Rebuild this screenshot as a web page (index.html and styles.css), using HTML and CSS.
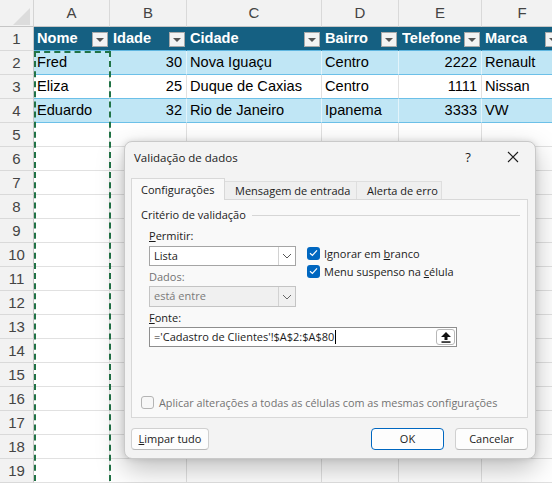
FILE: index.html
```html
<!DOCTYPE html>
<html lang="pt-BR">
<head>
<meta charset="utf-8">
<title>Validação de dados</title>
<link rel="stylesheet" href="styles.css">
</head>
<body>
<div class="sheet">
  <div class="row hdr">
    <div class="corner"><span class="tri"></span></div>
    <div class="ch">A</div><div class="ch">B</div><div class="ch">C</div><div class="ch">D</div><div class="ch">E</div><div class="ch">F</div>
  </div>
  <div class="row thead">
    <div class="rh">1</div>
    <div class="c th"><span class="t">Nome</span><span class="fb"></span></div>
    <div class="c th"><span class="t">Idade</span><span class="fb"></span></div>
    <div class="c th"><span class="t">Cidade</span><span class="fb"></span></div>
    <div class="c th"><span class="t">Bairro</span><span class="fb"></span></div>
    <div class="c th"><span class="t">Telefone</span><span class="fb"></span></div>
    <div class="c th"><span class="t">Marca</span><span class="fb"></span></div>
  </div>
  <div class="row band">
    <div class="rh">2</div>
    <div class="c">Fred</div><div class="c num">30</div><div class="c">Nova Iguaçu</div><div class="c">Centro</div><div class="c num">2222</div><div class="c">Renault</div>
  </div>
  <div class="row plain">
    <div class="rh">3</div>
    <div class="c">Eliza</div><div class="c num">25</div><div class="c">Duque de Caxias</div><div class="c">Centro</div><div class="c num">1111</div><div class="c">Nissan</div>
  </div>
  <div class="row band">
    <div class="rh">4</div>
    <div class="c">Eduardo</div><div class="c num">32</div><div class="c">Rio de Janeiro</div><div class="c">Ipanema</div><div class="c num">3333</div><div class="c">VW</div>
  </div>
  <div class="row"><div class="rh">5</div><div class="c"></div><div class="c"></div><div class="c"></div><div class="c"></div><div class="c"></div><div class="c"></div></div>
  <div class="row"><div class="rh">6</div><div class="c"></div><div class="c"></div><div class="c"></div><div class="c"></div><div class="c"></div><div class="c"></div></div>
  <div class="row"><div class="rh">7</div><div class="c"></div><div class="c"></div><div class="c"></div><div class="c"></div><div class="c"></div><div class="c"></div></div>
  <div class="row"><div class="rh">8</div><div class="c"></div><div class="c"></div><div class="c"></div><div class="c"></div><div class="c"></div><div class="c"></div></div>
  <div class="row"><div class="rh">9</div><div class="c"></div><div class="c"></div><div class="c"></div><div class="c"></div><div class="c"></div><div class="c"></div></div>
  <div class="row"><div class="rh">10</div><div class="c"></div><div class="c"></div><div class="c"></div><div class="c"></div><div class="c"></div><div class="c"></div></div>
  <div class="row"><div class="rh">11</div><div class="c"></div><div class="c"></div><div class="c"></div><div class="c"></div><div class="c"></div><div class="c"></div></div>
  <div class="row"><div class="rh">12</div><div class="c"></div><div class="c"></div><div class="c"></div><div class="c"></div><div class="c"></div><div class="c"></div></div>
  <div class="row"><div class="rh">13</div><div class="c"></div><div class="c"></div><div class="c"></div><div class="c"></div><div class="c"></div><div class="c"></div></div>
  <div class="row"><div class="rh">14</div><div class="c"></div><div class="c"></div><div class="c"></div><div class="c"></div><div class="c"></div><div class="c"></div></div>
  <div class="row"><div class="rh">15</div><div class="c"></div><div class="c"></div><div class="c"></div><div class="c"></div><div class="c"></div><div class="c"></div></div>
  <div class="row"><div class="rh">16</div><div class="c"></div><div class="c"></div><div class="c"></div><div class="c"></div><div class="c"></div><div class="c"></div></div>
  <div class="row"><div class="rh">17</div><div class="c"></div><div class="c"></div><div class="c"></div><div class="c"></div><div class="c"></div><div class="c"></div></div>
  <div class="row"><div class="rh">18</div><div class="c"></div><div class="c"></div><div class="c"></div><div class="c"></div><div class="c"></div><div class="c"></div></div>
  <div class="row"><div class="rh">19</div><div class="c"></div><div class="c"></div><div class="c"></div><div class="c"></div><div class="c"></div><div class="c"></div></div>

  <div class="ants"></div>

  <div class="dlg">
    <div class="titlebar">
      <span class="title">Validação de dados</span>
      <span class="help">?</span>
      <span class="close"><svg width="12" height="12" viewBox="0 0 12 12"><path d="M1 1 L11 11 M11 1 L1 11" stroke="#1b1b1b" stroke-width="1.1" fill="none"/></svg></span>
    </div>
    <div class="tabs">
      <div class="tab active">Configurações</div>
      <div class="tab t2">Mensagem de entrada</div>
      <div class="tab t3">Alerta de erro</div>
    </div>
    <div class="panel">
      <div class="legend">Critério de validação</div>
      <div class="crit">
        <div class="top">
          <div class="left">
            <div class="lbl"><u>P</u>ermitir:</div>
            <div class="sel">
              <span class="val">Lista</span>
              <span class="dd"><svg width="10" height="6" viewBox="0 0 10 6"><path d="M1 1 L5 5 L9 1" stroke="#555" stroke-width="1" fill="none"/></svg></span>
            </div>
            <div class="lbl gray lbl2">Dados:</div>
            <div class="sel dis">
              <span class="val">está entre</span>
              <span class="dd"><svg width="10" height="6" viewBox="0 0 10 6"><path d="M1 1 L5 5 L9 1" stroke="#666" stroke-width="1" fill="none"/></svg></span>
            </div>
          </div>
          <div class="right">
            <div class="chk"><span class="box on"><svg width="9" height="8" viewBox="0 0 9 8"><path d="M1 4.2 L3.4 6.4 L8 1.4" stroke="#fff" stroke-width="1.2" fill="none"/></svg></span><span class="ltxt">Ignorar em <u>b</u>ranco</span></div>
            <div class="chk"><span class="box on"><svg width="9" height="8" viewBox="0 0 9 8"><path d="M1 4.2 L3.4 6.4 L8 1.4" stroke="#fff" stroke-width="1.2" fill="none"/></svg></span><span class="ltxt">Menu suspenso na <u>c</u>élula</span></div>
          </div>
        </div>
        <div class="lbl lbl3"><u>F</u>onte:</div>
        <div class="inp">
          <span class="txt">='Cadastro de Clientes'!$A$2:$A$80</span><span class="caret"></span>
          <span class="rng"><svg width="10" height="11" viewBox="0 0 10 11"><path d="M5 0 L10 5 L6.5 5 L6.5 8 L3.5 8 L3.5 5 L0 5 Z" fill="#111"/><rect x="0.5" y="9.3" width="9" height="1.5" fill="#111"/></svg></span>
        </div>
      </div>
      <div class="chk apply"><span class="box off"></span><span class="ltxt">Aplicar alterações a todas as células com as mesmas configurações</span></div>
    </div>
    <div class="footer">
      <div class="btn b1"><u>L</u>impar tudo</div>
      <div class="btn ok">OK</div>
      <div class="btn cancel">Cancelar</div>
    </div>
  </div>
</div>
</body>
</html>
```
FILE: styles.css
```css
html, body {
  margin: 0;
  padding: 0;
  overflow: hidden;
  background: #ffffff;
}
.sheet {
  position: relative;
  width: 552px;
  height: 483px;
  overflow: hidden;
  font-family: "Liberation Sans", Arial, sans-serif;
  font-size: 14.6px;
  color: #000;
}
.row {
  display: grid;
  grid-template-columns: 34px 76px 77px 135px 77px 83px 81px;
  width: 563px;
  height: 24px;
}
.row.hdr {
  height: 27px;
}
.row > div {
  box-sizing: border-box;
  border-right: 1px solid #e1e1e1;
  border-bottom: 1px solid #e1e1e1;
  line-height: 23px;
  white-space: nowrap;
  overflow: hidden;
}
.corner {
  background: #f2f2f2;
  position: relative;
  border-right: 1px solid #d4d4d4 !important;
  border-bottom: 1px solid #c6c6c6 !important;
}
.tri {
  position: absolute;
  left: 13px;
  top: 8px;
  width: 17px;
  height: 17px;
  background: #dcdcdc;
  clip-path: polygon(100% 0, 100% 100%, 0 100%);
}
.ch {
  background: #f2f2f2;
  color: #444;
  text-align: center;
  line-height: 26px !important;
  border-right: 1px solid #d9d9d9 !important;
  border-bottom: 1px solid #c6c6c6 !important;
  font-size: 15px;
}
.rh {
  background: #f2f2f2;
  color: #444;
  text-align: center;
  border-right: 1px solid #c6c6c6 !important;
  border-bottom: 1px solid #d9d9d9 !important;
  font-size: 15px;
}
.c {
  padding: 0 3px;
}
.num {
  text-align: right;
  padding-right: 4px;
}
.thead .c {
  background: #156082;
  color: #fff;
  font-weight: bold;
  border-right: 1px solid #156082;
  border-bottom: 1px solid #5fb6e0;
  display: flex;
  align-items: center;
  padding: 0 1px 0 3px;
}
.th .t {
  flex: 1;
  overflow: hidden;
  white-space: nowrap;
  line-height: 23px;
}
.fb {
  flex-shrink: 0;
  width: 16px;
  height: 15px;
  box-sizing: border-box;
  background: #f3f3f3;
  border: 1px solid #a9a9a9;
  position: relative;
  margin-top: 2px;
}
.fb::after {
  content: "";
  position: absolute;
  left: 3px;
  top: 5px;
  border-left: 4px solid transparent;
  border-right: 4px solid transparent;
  border-top: 4px solid #555;
}
.band .c {
  background: #c0e6f5;
  border-right: 1px solid rgba(255, 255, 255, 0.55);
  border-bottom: 1px solid #6cc0e8;
}
.plain .c {
  background: #fff;
  border-bottom: 1px solid #6cc0e8;
}

.ants {
  position: absolute;
  left: 34px;
  top: 51px;
  width: 77px;
  height: 440px;
  box-sizing: border-box;
  border: 2px dashed #217346;
  border-bottom: none;
}

/* dialog */
.dlg {
  position: absolute;
  left: 124px;
  top: 141px;
  width: 412px;
  height: 318px;
  box-sizing: border-box;
  background: #f3f3f3;
  border: 1px solid #c9c9c9;
  border-radius: 8px;
  box-shadow: 0 10px 28px rgba(0, 0, 0, 0.26), 0 0 6px rgba(0, 0, 0, 0.12);
  padding: 0 7px 0 6px;
  display: flex;
  flex-direction: column;
  font-family: "Open Sans", "Noto Sans", sans-serif;
  font-size: 11px;
  color: #1b1b1b;
}
.titlebar {
  height: 30px;
  display: flex;
  align-items: center;
  padding-left: 3px;
  font-size: 11.5px;
}
.help {
  margin-left: auto;
  width: 20px;
  text-align: center;
  font-size: 13px;
}
.close {
  width: 20px;
  margin-left: 25px;
  margin-right: 5px;
  display: flex;
  justify-content: center;
}
.tabs {
  margin-top: 7px;
  height: 21px;
  display: flex;
  align-items: flex-end;
  margin-bottom: -1px;
  position: relative;
  z-index: 1;
}
.tab {
  box-sizing: border-box;
  height: 18px;
  margin-bottom: 1px;
  line-height: 17px;
  background: #efefef;
  border: 1px solid #dedede;
  border-left: none;
  border-bottom: none;
  padding-left: 10px;
}
.tab.active {
  width: 94px;
  height: 22px;
  margin-bottom: 0;
  line-height: 22px;
  background: #f9f9f9;
  border: 1px solid #d8d8d8;
  border-bottom: none;
  padding-left: 9px;
}
.tab.t2 {
  width: 132px;
}
.tab.t3 {
  width: 85px;
}
.panel {
  box-sizing: border-box;
  height: 219px;
  background: #f9f9f9;
  border: 1px solid #d8d8d8;
  padding: 8px 7px 8px 9px;
  display: flex;
  flex-direction: column;
}
.legend {
  height: 14px;
  line-height: 14px;
  display: flex;
  align-items: center;
}
.legend::after {
  content: "";
  flex: 1;
  border-top: 1px solid #d6d6d6;
  margin-left: 6px;
}
.crit {
  margin-left: 8px;
  margin-top: 7px;
}
.top {
  display: flex;
}
.left {
  width: 147px;
}
.lbl {
  height: 14px;
  line-height: 14px;
}
.gray {
  color: #737373;
}
.lbl2 {
  margin-top: 4px;
}
.lbl3 {
  margin-top: 4px;
}
.sel {
  margin-top: 3px;
  height: 20px;
  box-sizing: border-box;
  background: #fff;
  border: 1px solid #a5a5a5;
  display: flex;
  align-items: stretch;
}
.sel.dis {
  margin-top: 2px;
  height: 21px;
  background: #f0f0f0;
  border-color: #c4c4c4;
  color: #7a7a7a;
}
.sel .val {
  flex: 1;
  padding-left: 4px;
  line-height: 18px;
}
.sel .dd {
  width: 16px;
  border-left: 1px solid #d2d2d2;
  display: flex;
  align-items: center;
  justify-content: center;
}
.right {
  margin-left: 11px;
  padding-top: 15px;
}
.chk {
  height: 18px;
  display: flex;
  align-items: center;
  white-space: nowrap;
}
.ltxt {
  white-space: pre;
}
.box {
  width: 13px;
  height: 13px;
  box-sizing: border-box;
  border-radius: 3px;
  margin-right: 4px;
  display: flex;
  align-items: center;
  justify-content: center;
  flex-shrink: 0;
}
.box.on {
  background: #0067c0;
}
.box.off {
  border: 1px solid #b4b4b4;
  background: #f7f7f7;
  margin-right: 5px;
}
.inp {
  margin-top: 2px;
  width: 308px;
  height: 20px;
  box-sizing: border-box;
  background: #fff;
  border: 1px solid #8e8e8e;
  display: flex;
  align-items: center;
}
.inp .txt {
  padding-left: 4px;
  line-height: 18px;
  white-space: pre;
}
.caret {
  width: 1px;
  height: 14px;
  background: #000;
  margin-left: 1px;
}
.rng {
  margin-left: auto;
  margin-right: 1px;
  width: 19px;
  height: 16px;
  box-sizing: border-box;
  border: 1px solid #b8b8b8;
  border-radius: 3px;
  background: #fff;
  display: flex;
  align-items: center;
  justify-content: center;
}
.apply {
  margin-top: auto;
  height: 14px;
  color: #737373;
  font-size: 10.85px;
}
.footer {
  margin-top: 10px;
  display: flex;
}
.btn {
  height: 22px;
  box-sizing: border-box;
  background: #fdfdfd;
  border: 1px solid #d0d0d0;
  border-bottom-color: #b8b8b8;
  border-radius: 4px;
  text-align: center;
  line-height: 20px;
}
.b1 {
  width: 78px;
}
.ok {
  width: 73px;
  margin-left: auto;
  border: 1px solid #0067c0;
  box-shadow: inset 0 0 0 1px #ffffff;
}
.cancel {
  width: 73px;
  margin-left: 11px;
}
```
